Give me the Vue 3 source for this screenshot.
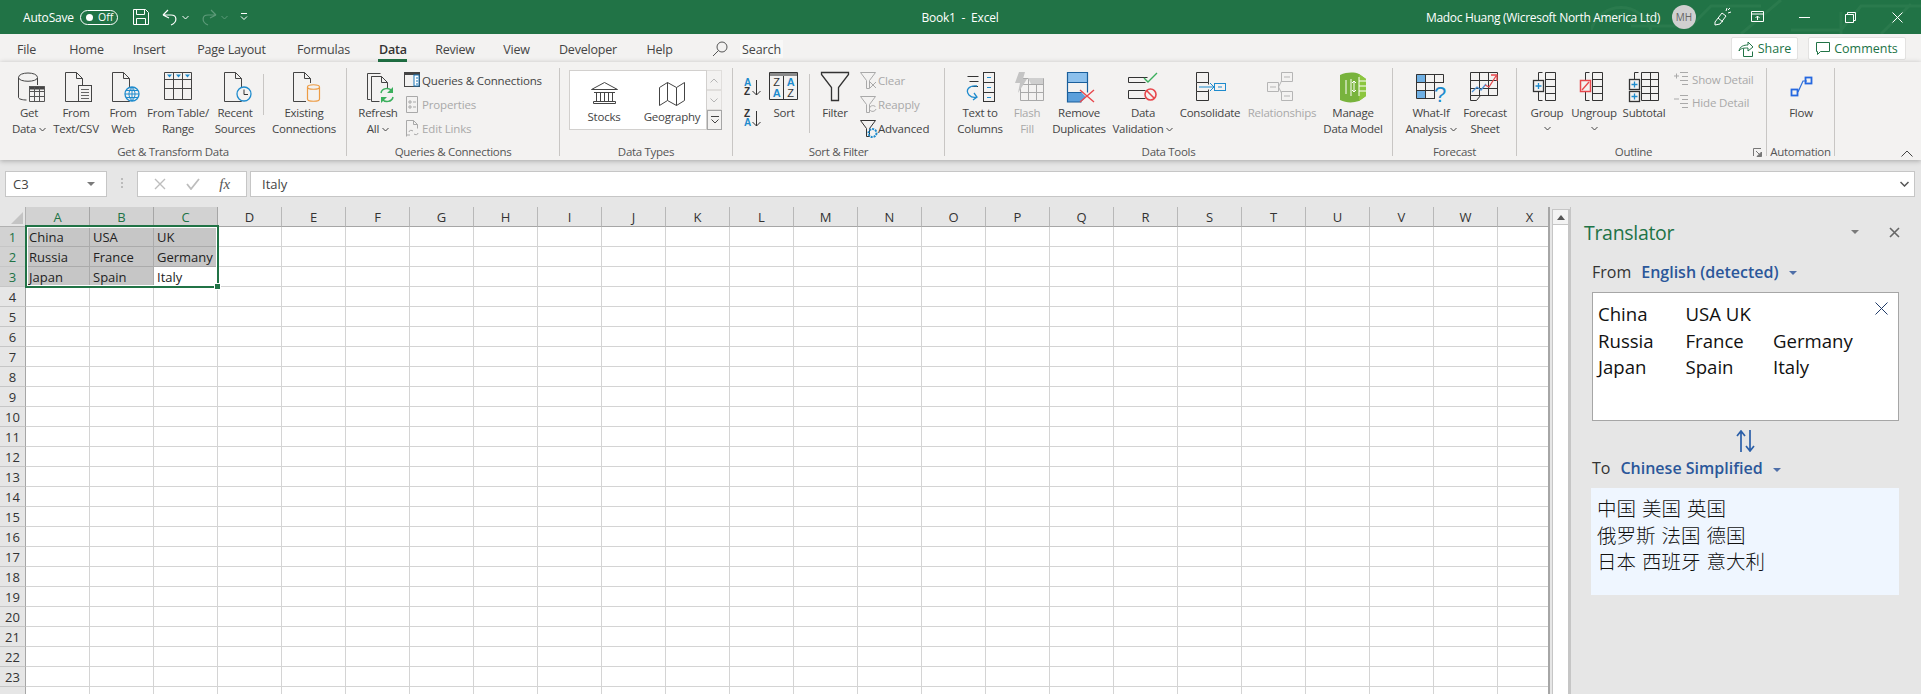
<script setup>
const D = '#444'
const K = '#333'
const B = '#1e8bcd'
const G = '#a9a9a9'
const F = 'font-family="Liberation Sans, sans-serif"'
const p = (d, c = D, extra = '') => `<path d="${d}" fill="none" stroke="${c}" ${extra}/>`
const doc = p('M5.5 1.5h11l6 6v23h-17zM16.5 1.5v6h6')
const cyl = (x, y, w, h, c) => p(`M${x} ${y + 2.5}c0-3 ${w}-3 ${w} 0v${h - 5}c0 3-${w} 3-${w} 0zM${x} ${y + 2.5}c0 3 ${w} 3 ${w} 0`, c, 'stroke-width="1.2"')
const gridBox = (x, y, w, h, xs, ys, c = D) => {
  let d = `M${x} ${y}h${w}v${h}h-${w}z`
  xs.forEach(a => { d += `M${a} ${y}v${h}` })
  ys.forEach(a => { d += `M${x} ${a}h${w}` })
  return p(d, c)
}

const icons = {
  getData: p('M5.500 6.500c0-6 19-6 19 0 0 5-19 5-19 0v20c0 1.500 4 2.500 8 2.500M24.500 7v7') + `<rect x="16" y="15" width="15.500" height="3.500" fill="${D}"/>` + gridBox(16.5, 15.5, 15, 15, [21.5, 26.5], [20.5, 25.5], '#555'),
  fromText: doc + `<rect x="18.500" y="14.500" width="13" height="16" fill="#f3f2f1" stroke="${D}"/>` + p('M21 18.500h8M21 21.500h8M21 24.500h8M21 27.500h8', '#666'),
  fromWeb: doc + `<circle cx="25" cy="23" r="7" fill="#f3f2f1" stroke="${B}" stroke-width="1.300"/>` + p('M18 23h14M25 16v14M19 19.500h12M19 26.500h12M25 16c-4 4-4 10 0 14M25 16c4 4 4 10 0 14', B),
  fromTable: gridBox(2.5, 1.5, 27, 27, [11.5, 20.5], [8.5, 17.5]) + `<path d="M5 3.500h5l-2.500 3zM14 3.500h5l-2.500 3zM23 3.500h5l-2.500 3z" fill="${B}"/>`,
  recent: doc + `<circle cx="25" cy="23" r="7" fill="#f3f2f1" stroke="${B}" stroke-width="1.300"/>` + p('M25 18.500v5h4', K),
  existing: doc + `<rect x="18" y="12" width="14" height="19" fill="#f3f2f1"/>` + cyl(19.5, 13.5, 12, 17, '#ed9c44'),
  refresh: p('M8.500 28.500h-3v-26h13M9.500 5.500h10l6 6v6M14.500 5.500h-5v25h8M19.500 5.500v6h6') + p('M19 22c1-5 8-6 11-2M31 26c-1 5-8 6-11 2', '#3aaf5c', 'stroke-width="1.500"') + `<path d="M31 16v6h-6zM19 32v-6h6z" fill="#3aaf5c"/>`,
  queries: `<rect x="1.500" y="1.500" width="15" height="14" fill="none" stroke="${D}"/><rect x="1" y="1" width="16" height="3" fill="${D}"/><rect x="11" y="4" width="5" height="11" fill="#fff" stroke="#1a76b8"/><path d="M13 7h2M13 10h2M13 13h2" stroke="#1a76b8"/>`,
  properties: p('M3.500 1.500h11v16h-11zM6 6h2v2h-2zM6 11h2v2h-2zM10 7h3M10 12h3', G),
  editLinks: p('M3.500 17.500v-16h7l4 4v4M10.500 1.500v4h4M6 13c0-2 3-2 4-1M15 14c0 2-3 2-4 1M7 16h-3.500', G),
  stocks: p('M1.500 9.500l13-7 13 7zM4 12.500h21M6.500 12.500v9M10.500 12.500v9M14.500 12.500v9M18.500 12.500v9M22.500 12.500v9M3.500 21.500h22v2h-22z'),
  map: p('M1.500 7.500l8-5 9 5 8-5v18l-8 5-9-5-8 5zM9.500 2.500v18M18.500 7.500v18'),
  az: `<text x="0" y="8" font-size="10" font-weight="700" fill="${B}" ${F}>A</text><text x="0" y="17" font-size="10" font-weight="700" fill="${K}" ${F}>Z</text>` + p('M12.500 2v15M8.500 13l4 4 4-4', K),
  za: `<text x="0" y="8" font-size="10" font-weight="700" fill="${K}" ${F}>Z</text><text x="0" y="17" font-size="10" font-weight="700" fill="${B}" ${F}>A</text>` + p('M12.500 2v15M8.500 13l4 4 4-4', K),
  sort: `<rect x="2" y="1" width="27" height="4" fill="#8a8a8a"/>` + p('M1.500 1.500h28v27h-28zM15.500 5v23', K) + `<text x="8.500" y="15" font-size="11" text-anchor="middle" fill="${K}" ${F}>Z</text><text x="8.500" y="26" font-size="11" font-weight="700" text-anchor="middle" fill="${B}" ${F}>A</text><text x="22.500" y="15" font-size="11" font-weight="700" text-anchor="middle" fill="${B}" ${F}>A</text><text x="22.500" y="26" font-size="11" text-anchor="middle" fill="${K}" ${F}>Z</text>`,
  filter: p('M2.500 1.500h27v2l-10 13v13h-7v-13l-10-13z', K, 'stroke-width="1.300"'),
  clear: p('M1.500 1.500h15l-6 8v8h-3v-8zM11 11l6 6M17 11l-6 6', G),
  reapply: p('M1.500 1.500h15l-6 8v8h-3v-8zM10.500 13c1-3 5-3 6-1M17 14c-1 3-5 3-6 1', G),
  advanced: p('M1.500 1.500h15l-6 8v8h-3v-8z', K) + `<circle cx="13.500" cy="14" r="4" fill="none" stroke="${B}" stroke-width="2" stroke-dasharray="2 1"/>`,
  t2c: p('M3.500 5.500h11M5.500 10.500h9M8 15.500h6', K) + p('M13 15c-8-1-12 4-8 9 2 2 5 3 8 2M10 22l3 4-4 3', B, 'stroke-width="1.300"') + `<rect x="19.500" y="1.500" width="11" height="29" fill="none" stroke="${K}"/><path d="M19.500 11.500h11M19.500 21.500h11" stroke="${K}"/><path d="M23 6.500h4M23 16.500h4M23 26.500h4" stroke="${B}"/>`,
  flash: gridBox(9.5, 7.500, 23, 22, [17.5, 25.5], [13.5, 21.5], G) + `<path d="M17 7h15v6h-12z" fill="#cfcfcf"/><path d="M8 1h6l-2 7h4l-9 14 2-10h-5z" fill="#c4c4c4"/>`,
  removeDup: `<rect x="5" y="1" width="19" height="10" fill="#8cc0ec"/><rect x="5" y="21" width="13" height="10" fill="#5b9fdb"/><path d="M18 21l5 5-5 5z" fill="#5b9fdb"/>` + p('M4.500 1.500h20v10h-20zM4.500 11.500v10M24.500 11.500v10M4.500 21.500h14M4.500 21.500v9.500h14', '#1a5f9c', 'stroke-width="1.200"') + p('M17 19l14 12M31 19l-14 12', '#e8474c', 'stroke-width="1.400"'),
  validation: p('M1.500 6.500h19M1.500 11.500h17M1.500 6.500v5M1.500 19.500h17M1.500 27.500h17M1.500 19.500v8', K) + p('M17 7l4 4 9-9', '#3aaf5c', 'stroke-width="1.400"') + `<circle cx="23.500" cy="23.500" r="5.500" fill="#f3f2f1" stroke="#e8474c" stroke-width="1.600"/><path d="M19.500 19.500l8 8" stroke="#e8474c" stroke-width="1.600"/>`,
  consolidate: p('M2.500 1.500h12v10h-12zM2.500 11.500v9M14.500 11.500v2M14.500 18.500v2M2.500 20.500h12v9h-12z', K) + p('M5 16h15M16 12l4 4-4 4', B) + `<rect x="20.500" y="12.500" width="11" height="7" fill="none" stroke="${B}"/><path d="M24 16h4" stroke="${B}"/>`,
  relationships: p('M15.500 1.500h11v9h-11zM15.500 20.500h11v9h-11zM1.500 11.500h11v9h-11zM12.500 16l3-6M12.500 16l3 6M18 6h6M18 25h6M4 16h6', '#b5b5b5'),
  manage: `<path d="M3 4c7-3 14-3 19-1l7 5v17l-7 5c-6 2-13 2-19-1z" fill="#78b33d"/><path d="M22 3l7 5v17l-7 5z" fill="#8cc63f"/><path d="M9 9v14M14 8v17M22 6v19M22 10h7M22 15h7M22 20h7" stroke="#fff" fill="none"/><path d="M15 12l2-2 2 2M17 10v11M15 19l2 2 2-2" stroke="#fff" fill="none"/>`,
  whatIf: `<rect x="1" y="3" width="9" height="8" fill="#6fb0e4"/><rect x="1" y="19" width="9" height="8" fill="#6fb0e4"/>` + gridBox(1.5, 3.5, 27, 24, [10.5, 19.5], [11.5, 19.5], K) + `<rect x="20" y="12" width="12" height="20" fill="#f3f2f1"/><text x="25" y="31" font-size="22" text-anchor="middle" fill="${B}" ${F}>?</text>`,
  forecast: gridBox(1.500, 1.500, 27, 23, [10.5, 19.5], [9.5, 17.5], K) + p('M1.500 24.500v5h6l4-5', K) + p('M3 21l5-5 4 3 5-6', '#4d94d8', 'stroke-width="1.300"') + p('M16 14l4 2 7-11M22 4h6v6', '#e8474c', 'stroke-width="1.300"'),
  group: p('M11.500 1.500h-4v8M7.500 21v8.500h4', K) + gridBox(14.5, 1.5, 10, 28, [], [8.5, 15.5, 22.5], K) + `<rect x="2.500" y="9.500" width="10" height="11" fill="#f3f2f1" stroke="${K}" stroke-width="1.300"/><path d="M4.500 15h6M7.500 12v6" stroke="${B}" stroke-width="1.300"/>`,
  ungroup: p('M11.500 1.500h-4v8M7.500 21v8.500h4', K) + gridBox(14.5, 1.5, 10, 28, [], [8.5, 15.5, 22.500], K) + `<rect x="2.500" y="9.500" width="10" height="11" fill="#f3f2f1" stroke="#e8474c" stroke-width="1.500"/><path d="M4 19l7-8" stroke="#e8474c" stroke-width="1.300"/>`,
  subtotal: p('M10.500 1.500h-4v7', K) + gridBox(13.5, 1.5, 17, 28, [22.5], [8.5, 15.5, 22.5], K) + `<rect x="1.500" y="8.500" width="10" height="10" fill="#f3f2f1" stroke="${K}" stroke-width="1.300"/><rect x="1.500" y="20.500" width="10" height="10" fill="#f3f2f1" stroke="${K}" stroke-width="1.300"/><path d="M3.500 13.500h6M6.500 10.500v6M3.500 25.500h6M6.500 22.500v6" stroke="${B}" stroke-width="1.300"/>`,
  showDetail: p('M1 5h5M3.500 2.500v5M7 1.500h8M9 5.500h6M7 9.500h8M9 13.500h6', G),
  hideDetail: p('M1 5h5M7 1.500h8M9 5.500h6M7 9.500h8M9 13.500h6', G),
  flow: `<path d="M13 21l5-11 4 0" fill="none" stroke="#2f6fd8" stroke-width="1.200"/><rect x="6.500" y="18.500" width="6" height="6" fill="none" stroke="#2568e0" stroke-width="1.800"/><rect x="20.500" y="6.500" width="6" height="6" fill="none" stroke="#2568e0" stroke-width="1.800"/>`,
}

const big = (w, icon, a, b = '', caret = false, off = false) => ({ kind: 'big', w, icon, a, b, caret, off })
const small = (icon, text, off = false) => ({ icon, text, off })

const groups = [
  { label: 'Get & Transform Data', w: 347, pad: 7, items: [
    big(44, 'getData', 'Get', 'Data', true), big(50, 'fromText', 'From', 'Text/CSV'), big(44, 'fromWeb', 'From', 'Web'),
    big(66, 'fromTable', 'From Table/', 'Range'), big(48, 'recent', 'Recent', 'Sources'), { kind: 'sep', w: 8, h: 41 },
    big(74, 'existing', 'Existing', 'Connections') ] },
  { label: 'Queries & Connections', w: 213, pad: 9, items: [
    big(44, 'refresh', 'Refresh', 'All', true),
    { kind: 'stack', ml: 3, rh: 24, rows: [small('queries', 'Queries & Connections'), small('properties', 'Properties', true), small('editLinks', 'Edit Links', true)] } ] },
  { label: 'Data Types', w: 173, pad: 9, items: [{ kind: 'gallery' }] },
  { label: 'Sort & Filter', w: 212, pad: 11, items: [
    { kind: 'sortpair' }, big(40, 'sort', 'Sort'), { kind: 'sep', w: 10, h: 59 }, big(42, 'filter', 'Filter'),
    { kind: 'stack', ml: 3, rh: 24, rows: [small('clear', 'Clear', true), small('reapply', 'Reapply', true), small('advanced', 'Advanced')] } ] },
  { label: 'Data Tools', w: 448, pad: 9, items: [
    big(52, 't2c', 'Text to', 'Columns'), big(42, 'flash', 'Flash', 'Fill', false, true), big(62, 'removeDup', 'Remove', 'Duplicates'),
    big(66, 'validation', 'Data', 'Validation', true), big(68, 'consolidate', 'Consolidate'),
    big(76, 'relationships', 'Relationships', '', false, true), big(66, 'manage', 'Manage', 'Data Model') ] },
  { label: 'Forecast', w: 124, pad: 8, items: [big(60, 'whatIf', 'What-If', 'Analysis', true), big(48, 'forecast', 'Forecast', 'Sheet')] },
  { label: 'Outline', w: 250, pad: 8, launcher: true, items: [
    big(44, 'group', 'Group', '', true), big(50, 'ungroup', 'Ungroup', '', true), big(50, 'subtotal', 'Subtotal'),
    { kind: 'stack', ml: 4, rh: 23, rows: [small('showDetail', 'Show Detail', true), small('hideDetail', 'Hide Detail', true)] } ] },
  { label: 'Automation', w: 68, pad: 1, items: [big(66, 'flow', 'Flow')] },
]

const tabs = [['File', 53], ['Home', 67], ['Insert', 58], ['Page Layout', 107], ['Formulas', 77], ['Data', 62], ['Review', 62], ['View', 61], ['Developer', 82], ['Help', 61]]
const columns = 'ABCDEFGHIJKLMNOPQRSTUVWX'.split('')
const rows = Array.from({ length: 24 }, (_, i) => i + 1)
const cells = { A1: 'China', B1: 'USA', C1: 'UK', A2: 'Russia', B2: 'France', C2: 'Germany', A3: 'Japan', B3: 'Spain', C3: 'Italy' }
const isSel = (c, r) => r <= 3 && 'ABC'.includes(c) && !(c === 'C' && r === 3)
const source = 'China\tUSA UK\nRussia\tFrance\tGermany\nJapan\tSpain\tItaly'
const target = '中国 美国 英国\n俄罗斯 法国 德国\n日本 西班牙 意大利'
</script>

<template>
  <div class="app">
    <header class="title">
      <svg class="circuit" width="330" height="34" viewBox="0 0 330 34"><path d="M0 30c10-30 50-30 60 0M40 26h60l20-20h50M150 34l40-34M200 30h50l20-24h60M250 34V12M290 34l30-30" fill="none" stroke="#2a7a4d" stroke-width="3"/></svg>
      <div class="title-left">
        <span class="autosave">AutoSave</span>
        <span class="toggle"><i class="knob"></i><span>Off</span></span>
        <svg class="save" width="16" height="16" viewBox="0 0 16 16"><path d="M.5.500h12l3 3v12h-15zM3.500.500v5h8v-5M3.500 15.500v-6h9v6" fill="none" stroke="#fff"/></svg>
        <svg class="undo" width="16" height="18" viewBox="0 0 16 18"><path d="M1 7l5-5M1 7l6 3M1 7h8c6 0 7 7 0 10" fill="none" stroke="#fff" stroke-width="1.200"/></svg>
        <svg class="chev" width="7" height="5" viewBox="0 0 7 5"><path d="M.5 1l3 3 3-3" fill="none" stroke="#fff"/></svg>
        <svg class="redo" width="16" height="18" viewBox="0 0 16 18"><path d="M15 7l-5-5M15 7l-6 3M15 7h-8c-6 0-7 7 0 10" fill="none" stroke="#5d9a79" stroke-width="1.200"/></svg>
        <svg class="chev" width="7" height="5" viewBox="0 0 7 5"><path d="M.5 1l3 3 3-3" fill="none" stroke="#5d9a79"/></svg>
        <svg class="qat" width="8" height="8" viewBox="0 0 8 8"><path d="M1 .500h6M1 3.500l3 3 3-3" fill="none" stroke="#fff"/></svg>
      </div>
      <div class="title-name">Book1&nbsp; -&nbsp; Excel</div>
      <div class="title-right">
        <span class="user">Madoc Huang (Wicresoft North America Ltd)</span>
        <span class="avatar">MH</span>
        <svg width="18" height="18" viewBox="0 0 18 18"><path d="M2 14l7-9 4 3-6 8-5 1zM5 10l5 4M13 3l1-3M15 5l3-1M15 2l2-2" fill="none" stroke="#fff"/></svg>
        <svg class="w-display" width="13" height="12" viewBox="0 0 13 12"><path d="M.5.500h12v10h-12zM.5 3h12M6.500 9V5M4.500 7l2-2 2 2" fill="none" stroke="#fff"/></svg>
        <svg class="w-min" width="11" height="1" viewBox="0 0 11 1"><path d="M0 .500h11" stroke="#fff"/></svg>
        <svg class="w-max" width="11" height="11" viewBox="0 0 11 11"><path d="M.5 2.500h8v8h-8zM2.500 2.500v-2h8v8h-2" fill="none" stroke="#fff"/></svg>
        <svg class="w-close" width="11" height="11" viewBox="0 0 11 11"><path d="M.5.500l10 10M10.500.500l-10 10" stroke="#fff"/></svg>
      </div>
    </header>

    <nav class="tabs">
      <span v-for="t in tabs" :key="t[0]" class="tab" :class="{ active: t[0] === 'Data' }" :style="{ width: t[1] + 'px' }">{{ t[0] }}</span>
      <svg class="search-ic" width="16" height="16" viewBox="0 0 16 16"><circle cx="10" cy="6" r="5" fill="none" stroke="#555"/><path d="M6.500 9.500L1 15" stroke="#555"/></svg>
      <span class="search">Search</span>
      <span class="spacer"></span>
      <span class="action share">
        <svg width="16" height="16" viewBox="0 0 16 16"><path d="M5.500 7.500v8h9v-5M1 10c1-5 5-6 9-6V1l5 5-5 4V7c-4 0-7 0-9 3z" fill="none" stroke="#217346"/></svg>
        Share
      </span>
      <span class="action comments">
        <svg width="14" height="14" viewBox="0 0 14 14"><path d="M.5.500h13v9h-9l-3 3v-3h-1z" fill="none" stroke="#217346"/></svg>
        Comments
      </span>
    </nav>

    <section class="ribbon">
      <div v-for="g in groups" :key="g.label" class="group" :style="{ width: g.w + 'px' }">
        <div class="group-body" :style="{ paddingLeft: g.pad + 'px' }">
          <template v-for="(it, n) in g.items" :key="n">
            <div v-if="it.kind === 'big'" class="big" :class="{ off: it.off }" :style="{ width: it.w + 'px' }">
              <svg class="big-ic" width="32" height="32" viewBox="0 0 32 32" v-html="icons[it.icon]"></svg>
              <span class="line">{{ it.a }}</span>
              <span class="line">{{ it.b }}<svg v-if="it.caret" class="caret" :class="{ alone: !it.b }" width="7" height="5" viewBox="0 0 7 5"><path d="M.5 1l3 3 3-3" fill="none" stroke="#444"/></svg></span>
            </div>
            <div v-else-if="it.kind === 'sep'" class="sep-wrap" :style="{ width: it.w + 'px' }"><i class="sep" :style="{ height: it.h + 'px' }"></i></div>
            <div v-else-if="it.kind === 'stack'" class="stack" :style="{ marginLeft: it.ml + 'px' }">
              <div v-for="r in it.rows" :key="r.text" class="row" :class="{ off: r.off }" :style="{ height: it.rh + 'px' }">
                <svg width="18" height="18" viewBox="0 0 18 18" v-html="icons[r.icon]"></svg>
                <span>{{ r.text }}</span>
              </div>
            </div>
            <div v-else-if="it.kind === 'sortpair'" class="sortpair">
              <svg width="18" height="18" viewBox="0 0 18 18" v-html="icons.az"></svg>
              <svg width="18" height="18" viewBox="0 0 18 18" v-html="icons.za"></svg>
            </div>
            <div v-else class="gallery">
              <div class="gal-main">
                <div class="gal-item"><svg width="28" height="26" viewBox="0 0 28 26" v-html="icons.stocks"></svg><span>Stocks</span></div>
                <div class="gal-item"><svg width="28" height="26" viewBox="0 0 28 26" v-html="icons.map"></svg><span>Geography</span></div>
              </div>
              <div class="gal-btns">
                <span class="gb"><svg width="8" height="5" viewBox="0 0 8 5"><path d="M.5 4.500l3.500-3.500 3.500 3.500" fill="none" stroke="#b5b5b5"/></svg></span>
                <span class="gb"><svg width="8" height="5" viewBox="0 0 8 5"><path d="M.5.500l3.500 3.500 3.500-3.500" fill="none" stroke="#b5b5b5"/></svg></span>
                <span class="gb more"><svg width="8" height="8" viewBox="0 0 8 8"><path d="M0 .500h8M.500 3.500l3.500 3.500 3.500-3.500" fill="none" stroke="#444"/></svg></span>
              </div>
            </div>
          </template>
        </div>
        <div class="group-label" :class="{ shift: g.launcher }">{{ g.label }}</div>
        <svg v-if="g.launcher" class="launcher" width="9" height="9" viewBox="0 0 9 9"><path d="M.5 8V.500H8" fill="none" stroke="#777"/><path d="M3 3l4 4M8.500 4v4.500H4z" fill="#777" stroke="#777"/></svg>
      </div>
      <svg class="collapse" width="12" height="7" viewBox="0 0 12 7"><path d="M.5 6.500L6 1l5.500 5.500" fill="none" stroke="#444"/></svg>
    </section>

    <div class="fbar">
      <div class="namebox"><span>C3</span><i class="tri"></i></div>
      <div class="dots"></div>
      <div class="fnbox">
        <svg width="12" height="12" viewBox="0 0 12 12"><path d="M1 1l10 10M11 1L1 11" stroke="#bdbdbd" stroke-width="1.400"/></svg>
        <svg width="14" height="12" viewBox="0 0 14 12"><path d="M1 6l4 5 8-10" fill="none" stroke="#bdbdbd" stroke-width="1.800"/></svg>
        <span class="fx">fx</span>
      </div>
      <div class="finput"><span>Italy</span><svg width="9" height="6" viewBox="0 0 9 6"><path d="M.5 1l4 4 4-4" fill="none" stroke="#555" stroke-width="1.500"/></svg></div>
    </div>

    <main class="work">
      <div class="sheet">
        <div class="corner"><i></i></div>
        <div v-for="c in columns" :key="c" class="chead" :class="{ sel: 'ABC'.includes(c) }">{{ c }}</div>
        <template v-for="r in rows" :key="r">
          <div class="rhead" :class="{ sel: r <= 3 }">{{ r < 24 ? r : '' }}</div>
          <div v-for="c in columns" :key="c + r" class="cell" :class="{ sel: isSel(c, r) }">{{ cells[c + r] }}</div>
        </template>
        <div class="selection"><i class="handle"></i></div>
      </div>
      <div class="gutter"></div>
      <div class="vscroll"><span class="up"><i></i></span></div>
      <aside class="panel">
        <div class="panel-head">
          <h2>Translator</h2>
          <i class="tri panel-tri"></i>
          <svg width="11" height="11" viewBox="0 0 11 11"><path d="M1 1l9 9M10 1l-9 9" stroke="#666" stroke-width="1.600"/></svg>
        </div>
        <div class="lang from"><span>From</span><b>English (detected)</b><i class="tri blue"></i></div>
        <div class="src">
          <div class="src-text">{{ source }}</div>
          <svg class="clear-x" width="13" height="13" viewBox="0 0 13 13"><path d="M.5.500l12 12M12.500.500l-12 12" stroke="#1f3a68"/></svg>
        </div>
        <div class="swap">
          <svg width="19" height="22" viewBox="0 0 19 22"><path d="M5 22V2M1 6l4-5 4 5M14 0v20M10 16l4 5 4-5" fill="none" stroke="#2b5fa8" stroke-width="1.700"/></svg>
        </div>
        <div class="lang to"><span>To</span><b>Chinese Simplified</b><i class="tri blue"></i></div>
        <div class="dst">{{ target }}</div>
      </aside>
    </main>
  </div>
</template>

<style>
html, body { margin: 0; height: 694px; overflow: hidden; background: #e6e6e6; }
</style>

<style scoped>
.app { width: 1921px; height: 694px; overflow: hidden; display: flex; flex-direction: column; font-family: "Open Sans", "Noto Sans", sans-serif; color: #444; background: #e6e6e6; }
.title { position: relative; height: 34px; background: #217346; color: #fff; display: grid; grid-template-columns: 1fr auto 1fr; align-items: center; font-size: 12px; flex: none; overflow: hidden; }
.circuit { position: absolute; right: 0; top: 0; }
.title-left { display: flex; align-items: center; padding-left: 23px; position: relative; }
.autosave { width: 57px; letter-spacing: -.2px; }
.toggle { width: 38px; height: 15px; box-sizing: border-box; border: 1px solid #fff; border-radius: 8px; display: flex; align-items: center; font-size: 10.5px; gap: 5px; padding-left: 5px; }
.knob { width: 7px; height: 7px; background: #fff; border-radius: 50%; }
.save { margin-left: 15px; }
.undo { margin-left: 13px; }
.chev { margin-left: 4px; }
.redo { margin-left: 12px; }
.qat { margin-left: 12px; }
.title-name { letter-spacing: -.2px; padding-right: 1px; }
.title-right { display: flex; align-items: center; justify-content: flex-end; position: relative; padding-right: 18px; }
.user { margin-right: 12px; letter-spacing: -.3px; }
.avatar { width: 24px; height: 24px; border-radius: 50%; background: #d0d0d0; color: #666; font-size: 10px; display: flex; align-items: center; justify-content: center; margin-right: 17px; }
.w-display { margin-left: 20px; }
.w-min { margin-left: 35px; }
.w-max { margin-left: 35px; }
.w-close { margin-left: 36px; }

.tabs { height: 28px; background: #f3f2f1; display: flex; align-items: stretch; font-size: 12.5px; flex: none; color: #444; }
.tab { display: flex; align-items: center; justify-content: center; padding-top: 2px; box-sizing: border-box; position: relative; letter-spacing: -.2px; }
.tab.active { font-weight: 600; color: #333; }
.tab.active::after { content: ""; position: absolute; left: 50%; margin-left: -15px; width: 29px; height: 3px; bottom: 0; background: #217346; }
.search-ic { align-self: center; margin: 2px 0 0 22px; }
.search { margin: 6px 0 4px 12px; width: 43px; display: flex; align-items: center; justify-content: center; background: #f8f8f7; letter-spacing: -.1px; height: 18px; }
.spacer { flex: 1; }
.action { align-self: flex-start; margin-top: 3px; height: 23px; box-sizing: border-box; background: #fff; border: 1px solid #e3e2e1; border-radius: 2px; display: flex; align-items: center; justify-content: center; gap: 4px; color: #217346; font-size: 12.5px; font-weight: 500; }
.share { width: 67px; }
.comments { width: 98px; margin-left: 10px; margin-right: 15px; }

.ribbon { height: 98px; background: #f3f2f1; display: flex; position: relative; flex: none; z-index: 2; box-shadow: 0 1px 5px rgba(0,0,0,.28); font-size: 11.5px; letter-spacing: -.25px; }
.group { position: relative; box-sizing: border-box; display: flex; flex-direction: column; height: 88px; margin-top: 6px; border-right: 1px solid #c8c6c4; flex: none; }
.group-body { height: 76px; flex: none; display: flex; align-items: flex-start; }
.group-label { height: 16px; line-height: 16px; text-align: center; color: #555; white-space: nowrap; letter-spacing: -.3px; flex: none; }
.group-label.shift { padding-right: 16px; }
.launcher { position: absolute; right: 4px; bottom: -1px; }
.big { display: flex; flex-direction: column; align-items: center; flex: none; padding-top: 3px; white-space: nowrap; }
.big-ic { display: block; margin-bottom: 2px; flex: none; overflow: visible; }
.line { height: 16px; line-height: 16px; display: block; }
.caret { margin-left: 3px; vertical-align: 1px; }
.caret.alone { margin-left: 0; vertical-align: 2px; }
.big.off, .row.off { color: #a9a9a9; }
.sep-wrap { display: flex; justify-content: center; padding-top: 6px; flex: none; }
.sep { width: 1px; background: #c8c6c4; display: block; }
.stack { display: flex; flex-direction: column; flex: none; white-space: nowrap; letter-spacing: -.15px; }
.row { display: flex; align-items: center; gap: 1px; }
.row svg { overflow: visible; }
.sortpair { width: 20px; flex: none; display: flex; flex-direction: column; gap: 13px; padding-top: 10px; }
.sortpair svg { overflow: visible; }
.gallery { display: flex; margin-top: 2px; height: 60px; }
.gal-main { width: 138px; box-sizing: border-box; background: #fff; border: 1px solid #d2d0ce; display: flex; }
.gal-item { width: 68px; display: flex; flex-direction: column; align-items: center; padding-top: 9px; gap: 3px; color: #444; }
.gal-btns { display: flex; flex-direction: column; width: 15px; }
.gb { height: 20px; box-sizing: border-box; border: 1px solid #e0dedc; border-left: 0; display: flex; align-items: center; justify-content: center; }
.gb.more { border: 1px solid #a6a6a6; background: #f3f2f1; }
.collapse { position: absolute; right: 8px; bottom: 3px; }

.fbar { display: flex; height: 26px; margin-top: 11px; padding-left: 5px; padding-right: 6px; flex: none; font-size: 13px; color: #444; }
.namebox, .fnbox, .finput { background: #fff; border: 1px solid #c6c6c6; box-sizing: border-box; display: flex; align-items: center; }
.namebox { width: 102px; justify-content: space-between; padding: 0 11px 0 7px; }
.tri { display: block; width: 0; height: 0; border-left: 4px solid transparent; border-right: 4px solid transparent; border-top: 4px solid #7a7a7a; }
.dots { width: 2px; margin: 7px 14px 0; height: 12px; background: repeating-linear-gradient(#bbb 0 2px, transparent 2px 4px); }
.fnbox { width: 110px; margin-left: 0; justify-content: space-around; padding: 0 6px; }
.fx { font-family: "Liberation Serif", serif; font-style: italic; font-size: 15px; color: #555; }
.finput { flex: 1; margin-left: 3px; padding: 0 5px 0 11px; justify-content: space-between; }

.work { display: flex; height: 487px; margin-top: 10px; flex: none; overflow: hidden; }
.sheet { position: relative; width: 1550px; flex: none; display: grid; grid-template-columns: 26px repeat(24, 64px); grid-template-rows: 20px repeat(24, 20px); overflow: hidden; background: #fff; font-size: 13px; border-right: 2px solid #a6a6a6; box-sizing: border-box; }
.corner { background: #e6e6e6; position: relative; border-right: 1px solid #b1b1b1; border-bottom: 1px solid #b1b1b1; }
.corner i { position: absolute; right: 2px; bottom: 2px; border-left: 12px solid transparent; border-bottom: 12px solid #c4c4c4; }
.chead { background: #e6e6e6; display: flex; align-items: center; justify-content: center; border-right: 1px solid #b8b8b8; border-bottom: 1px solid #a6a6a6; box-sizing: border-box; color: #333; }
.chead.sel { background: #d2d2d2; color: #217346; border-right-color: #a6a6a6; }
.rhead { background: #e6e6e6; display: flex; align-items: center; justify-content: center; border-right: 1px solid #a6a6a6; border-bottom: 1px solid #c6c6c6; box-sizing: border-box; color: #333; }
.rhead.sel { background: #d2d2d2; color: #217346; }
.cell { box-sizing: border-box; border-right: 1px solid #d4d4d4; border-bottom: 1px solid #d4d4d4; padding-left: 3px; line-height: 20px; color: #222; white-space: nowrap; overflow: hidden; }
.cell.sel { background: #c6c6c6; border-color: #ababab; }
.selection { position: absolute; left: 25px; top: 18px; width: 194px; height: 63px; box-sizing: border-box; border: 2px solid #217346; box-shadow: inset 0 0 0 1px #fff; pointer-events: none; }
.handle { position: absolute; right: -4px; bottom: -4px; width: 5px; height: 5px; background: #217346; border: 1px solid #fff; }
.gutter { width: 2px; flex: none; background: #e6e6e6; }
.vscroll { flex: none; background: #fff; border-right: 2px solid #c6c6c6; border-left: 1px solid #c6c6c6; box-sizing: border-box; margin-top: 2px; width: 18px; }
.up { display: flex; height: 14px; align-items: center; justify-content: center; border-bottom: 1px solid #c6c6c6; border-top: 1px solid #c6c6c6; background: #f3f3f3; }
.up i { border-left: 4px solid transparent; border-right: 4px solid transparent; border-bottom: 5px solid #555; }
.panel { flex: 1; background: #e6e6e6; padding: 0 21px 0 21px; border-left: 1px solid #c6c6c6; position: relative; font-size: 16px; color: #333; }
.panel-head { display: flex; align-items: center; height: 48px; margin: 0 0 0 -8px; padding-top: 2px; box-sizing: border-box; }
.panel-head h2 { margin: 0; font-weight: 400; font-size: 19.5px; color: #217346; flex: 1; font-family: "Open Sans", sans-serif; letter-spacing: -.3px; }
.panel-tri { margin-right: 30px; }
.lang { display: flex; align-items: center; height: 25px; }
.lang span { margin-right: 10px; }
.lang b { color: #2b579a; font-weight: 600; letter-spacing: 0; }
.tri.blue { border-top-color: #4f6fa8; margin-left: 10px; margin-top: 3px; }
.lang.from { margin-top: 4px; }
.src { height: 129px; width: 307px; box-sizing: border-box; background: #fff; border: 1px solid #a6a6a6; margin-top: 8px; position: relative; padding: 8px 5px; }
.src-text { white-space: pre; tab-size: 87.500px; font-size: 18.600px; line-height: 26.700px; color: #111; }
.clear-x { position: absolute; right: 10px; top: 9px; }
.swap { height: 34px; display: flex; justify-content: center; align-items: flex-start; padding-top: 9px; box-sizing: border-box; width: 307px; }
.lang.to { margin-top: 0; height: 33px; padding-bottom: 7px; box-sizing: border-box; }
.dst { width: 308px; height: 107px; margin-left: -1px; box-sizing: border-box; background: #eff6ff; padding: 7px 6px; white-space: pre; font-family: "Noto Sans CJK SC", sans-serif; font-size: 19.500px; font-weight: 300; word-spacing: 1.700px; line-height: 26.700px; color: #111; }
</style>
